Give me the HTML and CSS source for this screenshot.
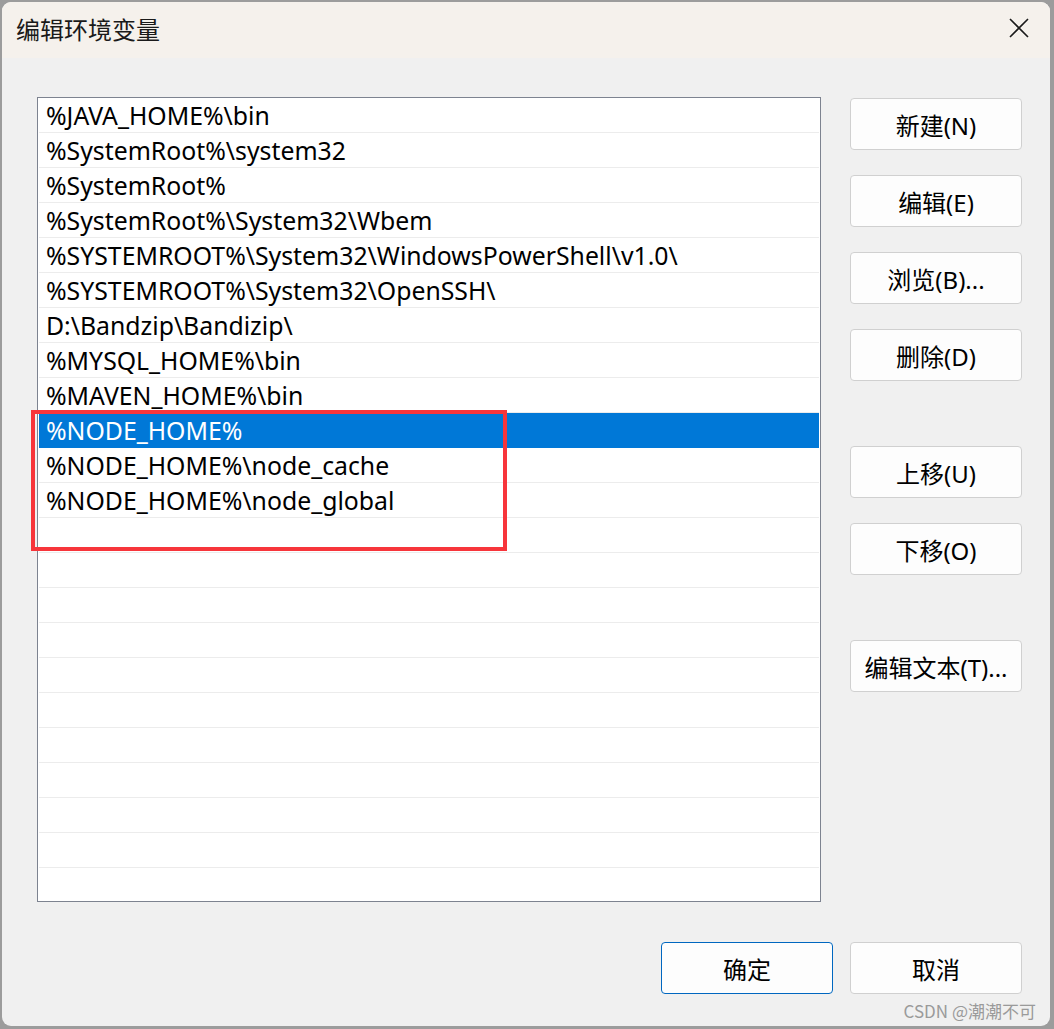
FILE: index.html
```html
<!DOCTYPE html>
<html lang="zh-CN">
<head>
<meta charset="utf-8">
<title>编辑环境变量</title>
<link rel="stylesheet" href="styles.css">
</head>
<body>
<div class="dialog">
  <div class="titlebar">
    <span class="title">编辑环境变量</span>
    <span class="close">
      <svg width="22" height="22" viewBox="0 0 22 22"><path d="M2 2 L20 20 M20 2 L2 20" stroke="#1a1a1a" stroke-width="1.6" fill="none"/></svg>
    </span>
  </div>
  <div class="content">
    <div class="main">
      <div class="listbox">
        <div class="row">%JAVA_HOME%\bin</div>
        <div class="row">%SystemRoot%\system32</div>
        <div class="row">%SystemRoot%</div>
        <div class="row">%SystemRoot%\System32\Wbem</div>
        <div class="row">%SYSTEMROOT%\System32\WindowsPowerShell\v1.0\</div>
        <div class="row">%SYSTEMROOT%\System32\OpenSSH\</div>
        <div class="row">D:\Bandzip\Bandizip\</div>
        <div class="row">%MYSQL_HOME%\bin</div>
        <div class="row">%MAVEN_HOME%\bin</div>
        <div class="row selected">%NODE_HOME%</div>
        <div class="row">%NODE_HOME%\node_cache</div>
        <div class="row">%NODE_HOME%\node_global</div>
        <div class="row"></div>
        <div class="row"></div>
        <div class="row"></div>
        <div class="row"></div>
        <div class="row"></div>
        <div class="row"></div>
        <div class="row"></div>
        <div class="row"></div>
        <div class="row"></div>
        <div class="row"></div>
        <div class="row last"></div>
        <div class="highlight"></div>
      </div>
      <div class="buttons">
        <button class="btn">新建(N)</button>
        <button class="btn gap-s">编辑(E)</button>
        <button class="btn gap-s">浏览(B)...</button>
        <button class="btn gap-s">删除(D)</button>
        <button class="btn gap-l">上移(U)</button>
        <button class="btn gap-s">下移(O)</button>
        <button class="btn gap-l">编辑文本(T)...</button>
      </div>
    </div>
    <div class="footer">
      <button class="btn primary">确定</button>
      <button class="btn">取消</button>
    </div>
  </div>
  <div class="watermark">CSDN @潮潮不可</div>
</div>
</body>
</html>
```
FILE: styles.css
```css
html, body {
  margin: 0;
  padding: 0;
}
body {
  width: 1054px;
  height: 1029px;
  background: #9c9c9c;
  font-family: "Noto Sans", "Noto Sans CJK SC", sans-serif;
  overflow: hidden;
}
.dialog {
  position: relative;
  margin: 2px 0 0 2px;
  width: 1048px;
  height: 1024px;
  background: #f0f0f0;
  border-radius: 9px;
  overflow: hidden;
  display: flex;
  flex-direction: column;
}
.titlebar {
  height: 56px;
  background: #f5f1ec;
  display: flex;
  align-items: center;
  justify-content: space-between;
  padding: 0 20px 0 14px;
  flex: none;
}
.title {
  font-family: "Noto Sans CJK SC", sans-serif;
  font-size: 24px;
  color: #1a1a1a;
  margin-top: -4px;
}
.close {
  display: flex;
  margin-top: -4px;
}
.content {
  padding: 39px 28px 0 35px;
  display: flex;
  flex-direction: column;
}
.main {
  display: flex;
  gap: 29px;
}
.listbox {
  position: relative;
  width: 784px;
  height: 805px;
  background: #fff;
  border: 1px solid #7d8390;
  box-sizing: border-box;
  padding: 0 1px;
}
.row {
  height: 35px;
  box-sizing: border-box;
  border-bottom: 1px solid #ececec;
  font-size: 24.8px;
  line-height: 35px;
  padding-left: 7px;
  color: #000;
  white-space: nowrap;
  font-family: "Noto Sans", "Noto Sans CJK SC", sans-serif;
}
.row.last {
  border-bottom: none;
}
.row.selected {
  background: #0078d7;
  color: #fff;
  border-bottom-color: #0078d7;
}
.highlight {
  position: absolute;
  left: -7px;
  top: 312px;
  width: 468px;
  height: 133px;
  border: 4px solid #f7353b;
  pointer-events: none;
}
.buttons {
  display: flex;
  flex-direction: column;
  padding-top: 1px;
}
.btn {
  width: 172px;
  height: 52px;
  background: #fdfdfd;
  border: 1px solid #d0d0d0;
  border-radius: 4px;
  font-family: "Noto Sans", "Noto Sans CJK SC", sans-serif;
  font-size: 24px;
  color: #000;
  padding: 0;
  flex: none;
}
.gap-s {
  margin-top: 25px;
}
.gap-l {
  margin-top: 65px;
}
.footer {
  display: flex;
  justify-content: flex-end;
  gap: 17px;
  margin-top: 40px;
}
.btn.primary {
  border: 1px solid #0067c0;
}
.watermark {
  position: absolute;
  right: 14px;
  bottom: 3px;
  font-family: "Noto Sans CJK SC", sans-serif;
  font-size: 17px;
  color: #9a9a9a;
}
```
